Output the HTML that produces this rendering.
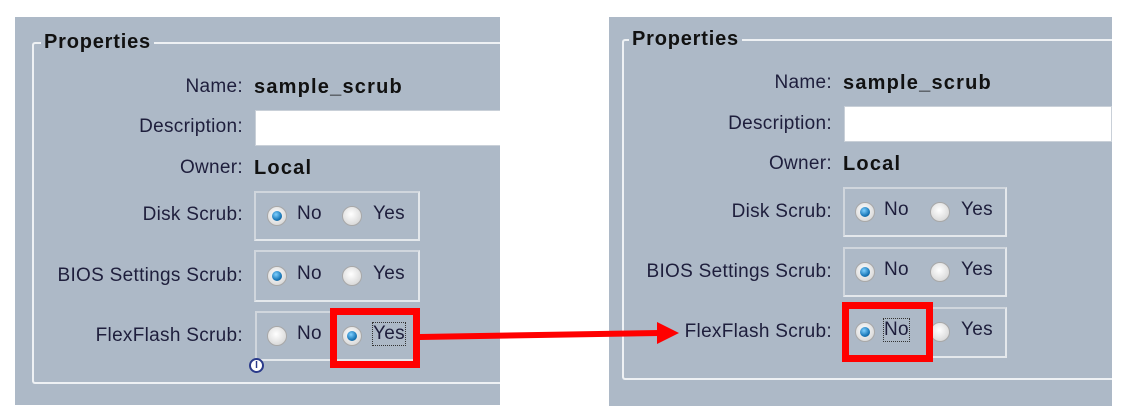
<!DOCTYPE html>
<html><head><meta charset="utf-8"><style>
*{margin:0;padding:0;box-sizing:border-box}
body{width:1125px;height:416px;background:#fff;position:relative;overflow:hidden;font-family:"Liberation Sans","DejaVu Sans",sans-serif;color:#1e1e3c}
.p{position:absolute;background:#adb9c7;overflow:hidden}
.a{position:absolute}
.fr{position:absolute;border:2px solid #eef1f4;border-right:none;border-radius:3px 0 0 3px}
.ttl{position:absolute;font-weight:bold;font-size:20px;letter-spacing:0.8px;color:#111;background:#adb9c7;padding:0 3px;line-height:22px}
.lb{position:absolute;font-size:19px;letter-spacing:0.3px;text-align:right;line-height:22px;white-space:nowrap}
.v{position:absolute;font-size:20px;letter-spacing:1.2px;font-weight:bold;color:#111;line-height:22px}
.in{position:absolute;background:#fff;border:1px solid #c9d0d8}
.bx{position:absolute;border:2px solid #e4e8ec;border-top-color:#d0d6dd;border-left-color:#d0d6dd}
.r{position:absolute;width:20px;height:20px;border-radius:50%;background:radial-gradient(circle at 45% 40%,#fff,#dcdcdc 70%,#b8b8b8);border:1px solid #a8a8a8}
.r.on::after{content:"";position:absolute;left:4px;top:4px;width:10px;height:10px;border-radius:50%;background:radial-gradient(circle at 40% 35%,#7fd0ff,#1a78b8 60%,#0b4f80)}
.t{position:absolute;font-size:19px;letter-spacing:0.3px;line-height:22px}
.red{position:absolute;border:7px solid #f00}
.dot{outline:1px dotted #333}
</style></head><body>

<div class="p" style="left:15px;top:17px;width:485px;height:388px">
  <div class="fr" style="left:17px;top:25px;width:480px;height:342px"></div>
  <div class="ttl" style="left:26px;top:14px">Properties</div>
  <div class="lb" style="right:257px;top:59px">Name:</div>
  <div class="v" style="left:239px;top:59px">sample_scrub</div>
  <div class="lb" style="right:257px;top:99px">Description:</div>
  <div class="in" style="left:240px;top:93px;width:260px;height:36px"></div>
  <div class="lb" style="right:257px;top:140px">Owner:</div>
  <div class="v" style="left:239px;top:140px">Local</div>
  <div class="lb" style="right:257px;top:187px">Disk Scrub:</div>
  <div class="bx" style="left:239px;top:174px;width:166px;height:50px"></div>
  <div class="r on" style="left:252px;top:189px"></div><div class="t" style="left:282px;top:186px">No</div>
  <div class="r" style="left:327px;top:189px"></div><div class="t" style="left:358px;top:186px">Yes</div>
  <div class="lb" style="right:257px;top:248px">BIOS Settings Scrub:</div>
  <div class="bx" style="left:239px;top:233px;width:166px;height:52px"></div>
  <div class="r on" style="left:252px;top:249px"></div><div class="t" style="left:282px;top:246px">No</div>
  <div class="r" style="left:327px;top:249px"></div><div class="t" style="left:358px;top:246px">Yes</div>
  <div class="lb" style="right:257px;top:308px">FlexFlash Scrub:</div>
  <div class="bx" style="left:240px;top:294px;width:165px;height:50px"></div>
  <div class="r" style="left:252px;top:309px"></div><div class="t" style="left:282px;top:306px">No</div>
  <div class="r on" style="left:327px;top:309px"></div><div class="t dot" style="left:358px;top:306px">Yes</div>
  <div class="a" style="left:234px;top:341px;width:15px;height:15px;border-radius:50%;background:#fff;border:2px solid #2a3a8a;font-size:10px;line-height:11px;text-align:center;font-weight:bold;color:#2a3a8a">I</div>
</div>

<div class="p" style="left:609px;top:17px;width:503px;height:389px">
  <div class="fr" style="left:13px;top:22px;width:490px;height:341px"></div>
  <div class="ttl" style="left:20px;top:11px">Properties</div>
  <div class="lb" style="right:280px;top:55px">Name:</div>
  <div class="v" style="left:234px;top:55px">sample_scrub</div>
  <div class="lb" style="right:280px;top:96px">Description:</div>
  <div class="in" style="left:235px;top:89px;width:268px;height:36px"></div>
  <div class="lb" style="right:280px;top:136px">Owner:</div>
  <div class="v" style="left:234px;top:136px">Local</div>
  <div class="lb" style="right:280px;top:184px">Disk Scrub:</div>
  <div class="bx" style="left:234px;top:170px;width:164px;height:50px"></div>
  <div class="r on" style="left:246px;top:185px"></div><div class="t" style="left:275px;top:182px">No</div>
  <div class="r" style="left:321px;top:185px"></div><div class="t" style="left:352px;top:182px">Yes</div>
  <div class="lb" style="right:280px;top:244px">BIOS Settings Scrub:</div>
  <div class="bx" style="left:234px;top:230px;width:164px;height:50px"></div>
  <div class="r on" style="left:246px;top:245px"></div><div class="t" style="left:275px;top:242px">No</div>
  <div class="r" style="left:321px;top:245px"></div><div class="t" style="left:352px;top:242px">Yes</div>
  <div class="lb" style="right:280px;top:304px">FlexFlash Scrub:</div>
  <div class="bx" style="left:234px;top:290px;width:164px;height:51px"></div>
  <div class="r on" style="left:246px;top:305px"></div><div class="t dot" style="left:275px;top:302px">No</div>
  <div class="r" style="left:321px;top:305px"></div><div class="t" style="left:352px;top:302px">Yes</div>
</div>

<div class="red" style="left:330px;top:308px;width:90px;height:60px"></div>
<div class="red" style="left:842px;top:302px;width:91px;height:60px"></div>
<svg class="a" style="left:0;top:0" width="1125" height="416">
  <polygon points="420,334 660,330 660,336 420,340" fill="#f00"/>
  <polygon points="657,322 679,333 657,344" fill="#f00"/>
</svg>
</body></html>
